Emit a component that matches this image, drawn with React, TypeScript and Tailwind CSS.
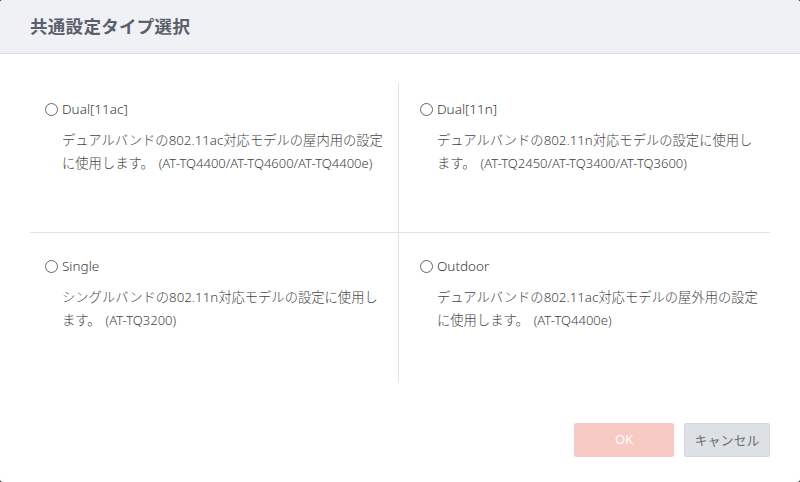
import React from 'react';

interface TypeOption {
  id: string;
  label: string;
  lines: React.ReactNode[];
}

const options: TypeOption[] = [
  {
    id: 'dual11ac',
    label: 'Dual[11ac]',
    lines: [
      'デュアルバンドの802.11ac対応モデルの屋内用の設定',
      <>に使用します。<span className="ml-[5px] text-[13px]">(AT-TQ4400/AT-TQ4600/AT-TQ4400e)</span></>,
    ],
  },
  {
    id: 'dual11n',
    label: 'Dual[11n]',
    lines: [
      'デュアルバンドの802.11n対応モデルの設定に使用し',
      <>ます。<span className="ml-[5px] text-[13px]">(AT-TQ2450/AT-TQ3400/AT-TQ3600)</span></>,
    ],
  },
  {
    id: 'single',
    label: 'Single',
    lines: [
      'シングルバンドの802.11n対応モデルの設定に使用し',
      <>ます。<span className="ml-[5px] text-[13px]">(AT-TQ3200)</span></>,
    ],
  },
  {
    id: 'outdoor',
    label: 'Outdoor',
    lines: [
      'デュアルバンドの802.11ac対応モデルの屋外用の設定',
      <>に使用します。<span className="ml-[5px] text-[13px]">(AT-TQ4400e)</span></>,
    ],
  },
];

function OptionCell({ option, className }: { option: TypeOption; className: string }) {
  return (
    <label className={`block cursor-pointer ${className}`}>
      <div className="flex h-[20px] items-center">
        <span className="h-[13px] w-[13px] rounded-full border border-[#666] bg-white" />
        <span className="ml-[4px] text-[13.5px] font-light text-[#3a3a3a]">{option.label}</span>
      </div>
      <div className="mt-[10px] pl-[17px] text-[13.3px] font-light leading-[23px] text-[#444]">
        {option.lines.map((line, i) => (
          <div key={i} className="whitespace-nowrap">{line}</div>
        ))}
      </div>
    </label>
  );
}

export default function App() {
  return (
    <div className="h-[482px] w-[800px] bg-[#333]">
      <div
        className="flex h-full w-full flex-col overflow-hidden rounded-[3px] bg-white"
        style={{ fontFamily: '"Noto Sans", "Noto Sans CJK JP", sans-serif' }}
      >
        {/* Header */}
        <div className="flex h-[54px] shrink-0 items-center border-b border-[#dfe0e4] bg-[#f0f1f5] px-[30px]">
          <h1
            className="text-[17.5px] font-bold tracking-[0.3px] text-[#5b5f6c]"
            style={{ fontFamily: '"Noto Sans CJK JP", sans-serif' }}
          >
            共通設定タイプ選択
          </h1>
        </div>

        {/* Body */}
        <div className="px-[30px] pt-[29px]">
          <div className="grid grid-cols-[369px_1fr]">
            <OptionCell option={options[0]} className="h-[150px] border-r border-[#e3e3e3] border-b pl-[15px] pt-[16px]" />
            <OptionCell option={options[1]} className="h-[150px] border-b border-[#e3e3e3] pl-[21px] pt-[16px]" />
            <OptionCell option={options[2]} className="h-[150px] border-r border-[#e3e3e3] pl-[15px] pt-[23px]" />
            <OptionCell option={options[3]} className="h-[150px] pl-[21px] pt-[23px]" />
          </div>
        </div>

        {/* Footer */}
        <div className="flex justify-end gap-[10px] px-[30px] pt-[40px]">
          <button className="h-[34px] w-[100px] rounded-[2px] bg-[#f8cac4] text-[13px] text-white">OK</button>
          <button
            className="h-[34px] w-[86px] rounded-[2px] border border-[#d4d8dd] bg-[#dde1e6] text-[13px] text-[#6b6f78]"
            style={{ fontFamily: '"Noto Sans CJK JP", sans-serif' }}
          >
            キャンセル
          </button>
        </div>
      </div>
    </div>
  );
}
